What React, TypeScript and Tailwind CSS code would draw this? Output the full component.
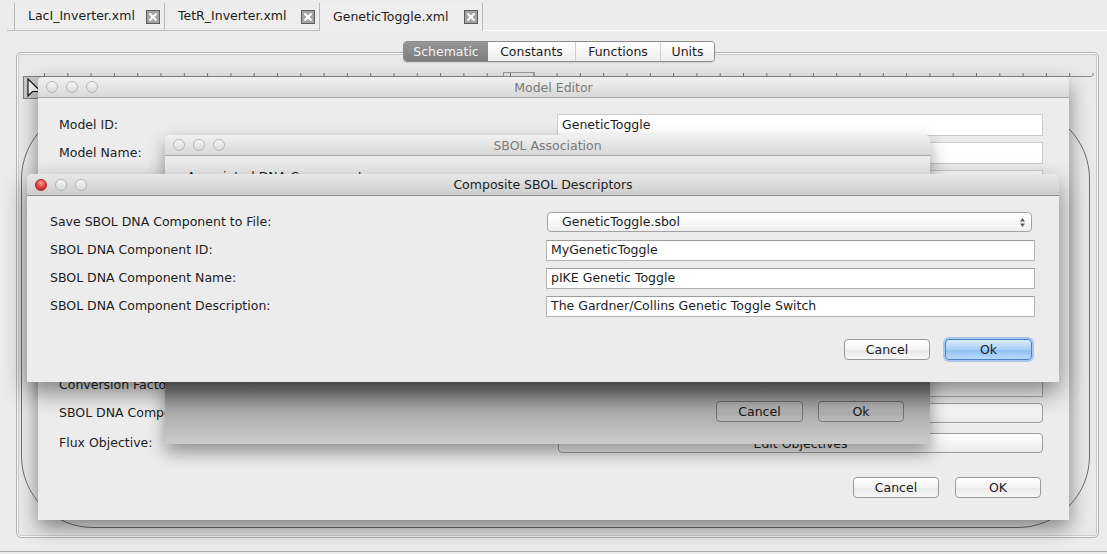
import React from 'react';

const tabs = [
  { name: 'LacI_Inverter.xml', width: 'w-[151px]', selected: false },
  { name: 'TetR_Inverter.xml', width: 'w-[155px]', selected: false },
  { name: 'GeneticToggle.xml', width: 'w-[163px]', selected: true },
];

const segments = [
  { name: 'Schematic', width: 'w-[84px]', selected: true },
  { name: 'Constants', width: 'w-[87px]', selected: false },
  { name: 'Functions', width: 'w-[85px]', selected: false },
  { name: 'Units', width: 'w-[54px]', selected: false },
];

const CloseBox = () => (
  <span className="flex h-[14px] w-[14px] items-center justify-center border border-[#5c5c5c] bg-[#a2a2a2]">
    <svg width="10" height="10" viewBox="0 0 10 10">
      <path d="M1.5 1.5 L8.5 8.5 M8.5 1.5 L1.5 8.5" stroke="#ffffff" strokeWidth="2.2" />
    </svg>
  </span>
);

const Lights = ({ active }: { active?: boolean }) => (
  <div className="flex items-center gap-[8px]">
    {[0, 1, 2].map((i) => (
      <span
        key={i}
        className={
          i === 0 && active
            ? 'h-[12px] w-[12px] rounded-full border border-[#a8262b] bg-[radial-gradient(circle_at_50%_30%,#ff9d94,#e3383c_55%,#b3191d)]'
            : 'h-[12px] w-[12px] rounded-full border border-[#b5b5b5] bg-[linear-gradient(#f6f6f6,#dadada)]'
        }
      />
    ))}
  </div>
);

const Window = ({
  title,
  active,
  className,
  children,
}: {
  title: string;
  active?: boolean;
  className: string;
  children: React.ReactNode;
}) => (
  <div className={`absolute flex flex-col overflow-hidden rounded-t-[5px] bg-[#ececec] ${className}`}>
    <div
      className={`grid shrink-0 grid-cols-[1fr_auto_1fr] items-center border-b px-[8px] ${
        active
          ? 'h-[22px] border-[#8c8c8c] bg-[linear-gradient(#e8e8e8,#cdcdcd)] text-[#1e1e1e]'
          : 'h-[21px] border-[#a7a7a7] bg-[linear-gradient(#f1f1f1,#d8d8d8)] text-[#7a7a7a]'
      }`}
    >
      <Lights active={active} />
      <span className="pt-[2px]">{title}</span>
      <span />
    </div>
    {children}
  </div>
);

const Btn = ({ label, primary, className = '' }: { label: string; primary?: boolean; className?: string }) => (
  <button
    className={`flex h-[21px] items-center justify-center rounded-[4px] border pt-[1px] ${
      primary
        ? 'border-[#4b82c4] bg-[linear-gradient(#d9ebfc,#a9d0f6_50%,#8ebff2_51%,#b8dafb)] shadow-[0_0_0_2px_rgba(115,168,236,0.55)]'
        : 'border-[#9a9a9a] bg-[linear-gradient(#ffffff,#f4f4f4_50%,#e8e8e8_51%,#f7f7f7)]'
    } ${className}`}
  >
    {label}
  </button>
);

const Field = ({ value, light }: { value?: string; light?: boolean }) => (
  <div
    className={`flex flex-1 items-center border bg-white px-[4px] pt-[1px] ${
      light ? 'h-[22px] border-[#cbcbcb]' : 'h-[21px] border-[#b4b4b4] border-t-[#9c9c9c]'
    }`}
  >
    {value}
  </div>
);

const Ruler = () => (
  <svg width="1081" height="5" className="block">
    <line x1="6" y1="4.5" x2="1075" y2="4.5" stroke="#8a8a8a" />
    {Array.from({ length: 46 }).map((_, i) => (
      <line key={i} x1={27.5 + i * 23.3} y1="1" x2={27.5 + i * 23.3} y2="4" stroke="#777" />
    ))}
    <rect x="486.5" y="0.5" width="31" height="4" fill="none" stroke="#9a9a9a" />
  </svg>
);

export default function App() {
  return (
    <div className="relative h-[554px] w-[1107px] overflow-hidden bg-[#ececec] font-['DejaVu_Sans',sans-serif] text-[12.5px] text-[#1c1c1c]">
      {/* document tabs */}
      <div className="flex h-[31px] items-end pl-[7px]">
        <div className="h-[28px] w-[7px] border-b border-[#bdbdbd]" />
        {tabs.map((t, i) => (
          <div
            key={t.name}
            className={`flex h-[28px] items-center justify-between border-r border-[#b9b9b9] pl-[13px] pr-[4px] ${t.width} ${
              i === 0 ? 'border-l' : ''
            } ${t.selected ? 'bg-[#eeeeee]' : 'border-b border-b-[#bdbdbd] bg-[#ededed]'}`}
          >
            <span>{t.name}</span>
            <CloseBox />
          </div>
        ))}
        <div className="h-[28px] flex-1 border-b border-white" />
      </div>

      {/* view switcher */}
      <div className="relative z-10 mt-[10px] flex h-[21px] pl-[403px]">
        <div className="flex overflow-hidden rounded-[4px] border border-[#8b8b8b] shadow-[0_1px_1px_rgba(0,0,0,0.12)]">
          {segments.map((s, i) => (
            <div
              key={s.name}
              className={`flex items-center justify-center pt-[1px] ${s.width} ${
                s.selected
                  ? 'bg-[linear-gradient(#969696,#7c7c7c)] text-[#f2f2f2]'
                  : 'bg-[linear-gradient(#ffffff,#eeeeee)] text-[#1c1c1c]'
              } ${i > 1 ? 'border-l border-[#cfcfcf]' : ''}`}
            >
              {s.name}
            </div>
          ))}
        </div>
      </div>

      {/* schematic panel */}
      <div className="-mt-[10px] ml-[16px] flex h-[486px] w-[1083px] flex-col rounded-[5px] border border-[#b5b5b5] bg-[#e9e9e9] shadow-[inset_0_0_0_1px_#f8f8f8,inset_0_0_0_2px_#cdcdcd]">
        <div className="flex h-[50px] shrink-0 flex-col pt-[19px]">
          <Ruler />
          <div className="-mt-[1px] ml-[6px] flex h-[23px] w-[22px] items-center justify-center border border-[#7d7d7d] bg-[#c9c9c9]">
            <svg width="16" height="20" viewBox="0 0 16 20">
              <path d="M2 1 L2 18 L6.5 13.5 L15 13.5 Z" fill="#fafafa" stroke="#111" strokeWidth="1.2" strokeLinejoin="miter" />
            </svg>
          </div>
        </div>
        <div className="relative flex-1">
          {/* compartment outline on the canvas */}
          <div className="absolute left-[4px] top-[4px] h-[421px] w-[1069px] rounded-[72px] border border-[#6e6e6e]" />
        </div>
      </div>
      <div className="mt-[13px] h-px bg-[#a9a9a9]" />

      {/* Model Editor */}
      <Window title="Model Editor" className="left-[38px] top-[77px] h-[443px] w-[1031px] shadow-[0_8px_20px_rgba(0,0,0,0.45)]">
        <div className="flex flex-1 flex-col pb-[22px] pl-[21px] pr-[26px] pt-[16px]">
          <div className="flex flex-col gap-[6px]">
            <div className="flex items-center">
              <span className="w-[498px] pt-[1px]">Model ID:</span>
              <Field light value="GeneticToggle" />
            </div>
            <div className="flex items-center">
              <span className="w-[498px] pt-[1px]">Model Name:</span>
              <Field light />
            </div>
            <div className="flex items-center">
              <span className="w-[498px] pt-[1px]">Model Version:</span>
              <Field light />
            </div>
          </div>
          <div className="flex-1" />
          <div className="flex items-center">
            <span className="w-[498px] pt-[1px]">Conversion Factor:</span>
            <div className="h-[24px] flex-1 border border-[#a9a9a9] bg-[#f4f4f4]" />
          </div>
          <div className="mt-[6px] flex items-center">
            <span className="w-[499px] pt-[1px]">SBOL DNA Component:</span>
            <button className="h-[20px] flex-1 rounded-[4px] border border-[#9d9d9d] bg-[linear-gradient(#ffffff,#eaeaea)]" />
          </div>
          <div className="mt-[10px] flex items-center">
            <span className="w-[499px] pt-[1px]">Flux Objective:</span>
            <button className="h-[20px] flex-1 rounded-[4px] border border-[#9d9d9d] bg-[linear-gradient(#ffffff,#eaeaea)] pt-[1px]">
              Edit Objectives
            </button>
          </div>
          <div className="mt-[24px] flex justify-end gap-[16px] pr-[2px]">
            <Btn label="Cancel" className="w-[86px]" />
            <Btn label="OK" className="w-[86px]" />
          </div>
        </div>
      </Window>

      {/* SBOL Association */}
      <Window title="SBOL Association" className="left-[165px] top-[135px] h-[309px] w-[765px] shadow-[0_8px_18px_rgba(0,0,0,0.4)]">
        <div className="relative flex flex-1 flex-col pb-[23px] pl-[22px] pr-[26px] pt-[12px]">
          <span>Associated DNA Components:</span>
          <div className="flex-1" />
          <div className="flex h-[20px] justify-end gap-[15px]">
            <Btn label="Cancel" className="h-[20px] w-[87px]" />
            <Btn label="Ok" className="h-[20px] w-[86px]" />
          </div>
          <div className="absolute inset-x-0 bottom-0 h-[62px] bg-[linear-gradient(rgba(0,0,0,0.5),rgba(0,0,0,0.28)_45%,rgba(0,0,0,0.14))]" />
        </div>
      </Window>

      {/* Composite SBOL Descriptors */}
      <Window
        title="Composite SBOL Descriptors"
        active
        className="left-[27px] top-[174px] h-[208px] w-[1032px] shadow-[0_10px_24px_rgba(0,0,0,0.48)]"
      >
        <div className="flex flex-1 flex-col pb-[22px] pl-[23px] pr-[24px] pt-[12px]">
          <div className="grid grid-cols-[496px_1fr] auto-rows-[28px] items-center">
            <span className="pt-[1px]">Save SBOL DNA Component to File:</span>
            <div className="ml-[1px] mr-[3px] flex h-[20px] items-center justify-between rounded-[4px] border border-[#a2a2a2] bg-[linear-gradient(#ffffff,#f0f0f0)] pl-[14px] pr-[5px] pt-[1px]">
              <span>GeneticToggle.sbol</span>
              <svg width="7" height="11" viewBox="0 0 7 11">
                <path d="M3.5 1 L6 4.5 L1 4.5 Z M3.5 10 L6 6.5 L1 6.5 Z" fill="#555" />
              </svg>
            </div>
            <span className="pt-[1px]">SBOL DNA Component ID:</span>
            <Field value="MyGeneticToggle" />
            <span className="pt-[1px]">SBOL DNA Component Name:</span>
            <Field value="pIKE Genetic Toggle" />
            <span className="pt-[1px]">SBOL DNA Component Description:</span>
            <Field value="The Gardner/Collins Genetic Toggle Switch" />
          </div>
          <div className="mt-[19px] flex justify-end gap-[15px] pr-[3px]">
            <Btn label="Cancel" className="w-[86px]" />
            <Btn label="Ok" primary className="w-[87px]" />
          </div>
        </div>
      </Window>
    </div>
  );
}
